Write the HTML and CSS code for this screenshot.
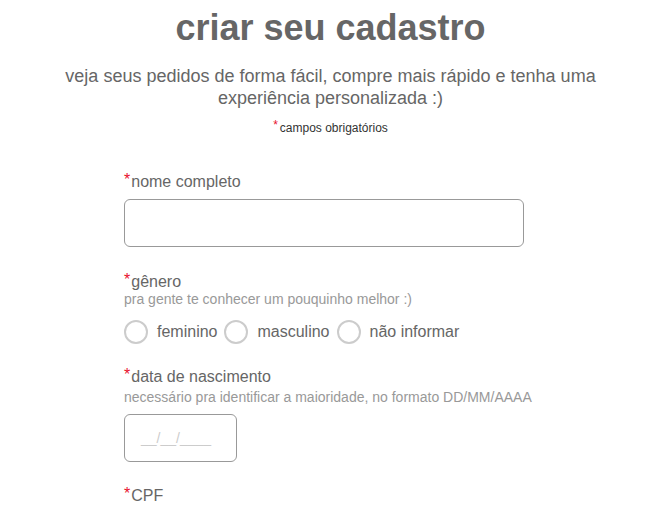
FILE: index.html
```html
<!DOCTYPE html>
<html lang="pt-BR">
<head>
<meta charset="utf-8">
<link rel="stylesheet" href="styles.css">
</head>
<body>
<main class="page">
  <h1 class="title">criar seu cadastro</h1>
  <p class="subtitle">veja seus pedidos de forma fácil, compre mais rápido e tenha uma experiência personalizada :)</p>
  <p class="required-note"><span class="star">*</span>campos obrigatórios</p>

  <form class="form">
    <div class="field">
      <label class="label"><span class="star">*</span>nome completo</label>
      <input class="input" type="text">
    </div>

    <div class="field field-radios">
      <label class="label"><span class="star">*</span>gênero</label>
      <p class="hint">pra gente te conhecer um pouquinho melhor :)</p>
      <div class="radios">
        <label class="radio"><span class="circle"></span>feminino</label>
        <label class="radio"><span class="circle"></span>masculino</label>
        <label class="radio"><span class="circle"></span>não informar</label>
      </div>
    </div>

    <div class="field field-date">
      <label class="label"><span class="star">*</span>data de nascimento</label>
      <p class="hint hint-spaced">necessário pra identificar a maioridade, no formato DD/MM/AAAA</p>
      <div class="input date">__/__/____</div>
    </div>

    <div class="field">
      <label class="label"><span class="star">*</span>CPF</label>
    </div>
  </form>
</main>
</body>
</html>
```

FILE: styles.css
```css
* { box-sizing: border-box; }
html, body { margin: 0; padding: 0; background: #fff; }
body {
  font-family: "Liberation Sans", Arial, sans-serif;
  color: #666;
  overflow: hidden;
}
.page { width: 661px; }
.title {
  margin: 7px 0 0;
  text-align: center;
  font-size: 36px;
  font-weight: bold;
  line-height: 41px;
  color: #666;
}
.subtitle {
  margin: 17px auto 0;
  width: 560px;
  text-align: center;
  font-size: 18px;
  line-height: 22px;
  color: #666;
}
.required-note {
  margin: 12px 0 0;
  text-align: center;
  font-size: 12px;
  line-height: 14px;
  color: #333;
}
.star { color: #e8112d; }
.required-note .star { position: relative; top: -3px; margin-right: 2px; }
.form {
  width: 413px;
  margin: 0 auto;
  padding-top: 38px;
}
.field { margin-bottom: 26px; }
.field-radios { margin-bottom: 24px; }
.field-date { margin-bottom: 25px; }
.label {
  display: block;
  font-size: 16px;
  line-height: 18px;
  color: #666;
}
.label .star { position: relative; top: -2px; margin-right: 1px; }
.hint {
  margin: 0;
  font-size: 14px;
  line-height: 17px;
  color: #999;
}
.hint-spaced { margin-top: 3px; }
.input {
  display: block;
  margin-top: 8px;
  width: 400px;
  height: 48px;
  border: 1px solid #999;
  border-radius: 6px;
  background: #fff;
  font: inherit;
}
.date {
  width: 113px;
  margin-top: 8px;
  padding-left: 16px;
  font-size: 14px;
  line-height: 46px;
  color: #ccc;
}
.radios {
  display: flex;
  gap: 7px;
  margin-top: 12px;
}
.radio {
  display: flex;
  align-items: center;
  font-size: 16px;
  color: #666;
}
.circle {
  width: 24px;
  height: 24px;
  border: 2px solid #ccc;
  border-radius: 50%;
  margin-right: 9px;
}
```
